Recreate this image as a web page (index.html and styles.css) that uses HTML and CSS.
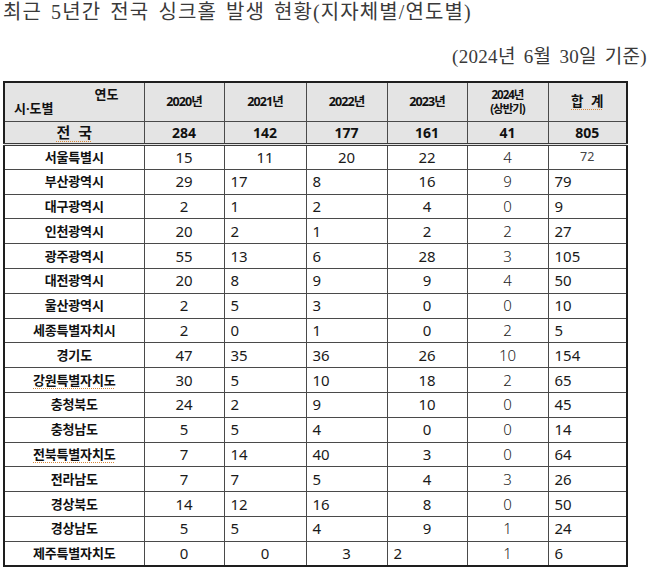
FILE: index.html
```html
<!DOCTYPE html>
<html lang="ko">
<head>
<meta charset="utf-8">
<title>최근 5년간 전국 싱크홀 발생 현황</title>
<link rel="stylesheet" href="styles.css">
</head>
<body>
<h1 class="title">최근 5년간 전국 싱크홀 발생 현황(지자체별/연도별)</h1>
<p class="basis">(2024년 6월 30일 기준)</p>
<table class="stats">
  <colgroup>
    <col class="w-region"><col class="w-a"><col class="w-b"><col class="w-c"><col class="w-d"><col class="w-e"><col class="w-f">
  </colgroup>
  <thead>
    <tr class="head">
      <th class="corner"><span class="corner-year">연도</span><span class="corner-region">시·도별</span></th>
      <th class="year">2020년</th>
      <th class="year">2021년</th>
      <th class="year">2022년</th>
      <th class="year">2023년</th>
      <th class="year half"><span class="half-line">2024년</span><span class="half-line">(상반기)</span></th>
      <th class="sum"><span class="squiggle">합 계</span></th>
    </tr>
    <tr class="total">
      <th class="nation"><span class="squiggle">전 국</span></th>
      <th>284</th><th>142</th><th>177</th><th>161</th><th>41</th><th>805</th>
    </tr>
  </thead>
  <tbody>
    <tr class="first"><th>서울특별시</th><td>15</td><td class="c">11</td><td class="c">20</td><td>22</td><td>4</td><td class="c small">72</td></tr>
    <tr><th>부산광역시</th><td>29</td><td>17</td><td>8</td><td>16</td><td>9</td><td>79</td></tr>
    <tr><th>대구광역시</th><td>2</td><td>1</td><td>2</td><td>4</td><td>0</td><td>9</td></tr>
    <tr><th>인천광역시</th><td>20</td><td>2</td><td>1</td><td>2</td><td>2</td><td>27</td></tr>
    <tr><th>광주광역시</th><td>55</td><td>13</td><td>6</td><td>28</td><td>3</td><td>105</td></tr>
    <tr><th>대전광역시</th><td>20</td><td>8</td><td>9</td><td>9</td><td>4</td><td>50</td></tr>
    <tr><th>울산광역시</th><td>2</td><td>5</td><td>3</td><td>0</td><td>0</td><td>10</td></tr>
    <tr><th>세종특별자치시</th><td>2</td><td>0</td><td>1</td><td>0</td><td>2</td><td>5</td></tr>
    <tr><th>경기도</th><td>47</td><td>35</td><td>36</td><td>26</td><td>10</td><td>154</td></tr>
    <tr><th><span class="squiggle">강원특별자치도</span></th><td>30</td><td>5</td><td>10</td><td>18</td><td>2</td><td>65</td></tr>
    <tr><th>충청북도</th><td>24</td><td>2</td><td>9</td><td>10</td><td>0</td><td>45</td></tr>
    <tr><th>충청남도</th><td>5</td><td>5</td><td>4</td><td>0</td><td>0</td><td>14</td></tr>
    <tr><th><span class="squiggle">전북특별자치도</span></th><td>7</td><td>14</td><td>40</td><td>3</td><td>0</td><td>64</td></tr>
    <tr><th>전라남도</th><td>7</td><td>7</td><td>5</td><td>4</td><td>3</td><td>26</td></tr>
    <tr><th>경상북도</th><td>14</td><td>12</td><td>16</td><td>8</td><td>0</td><td>50</td></tr>
    <tr><th>경상남도</th><td>5</td><td>5</td><td>4</td><td>9</td><td>1</td><td>24</td></tr>
    <tr><th>제주특별자치도</th><td>0</td><td class="c">0</td><td class="c">3</td><td class="l">2</td><td>1</td><td>6</td></tr>
  </tbody>
</table>
</body>
</html>
```

FILE: styles.css
```css
html, body {
  margin: 0;
  padding: 0;
  background: #ffffff;
  color: #111111;
}

.title {
  margin: 0;
  padding-left: 3px;
  font-family: "Liberation Serif", "Noto Sans CJK KR", serif;
  font-weight: 400;
  font-size: 20px;
  line-height: 24px;
  letter-spacing: 1.1px;
  word-spacing: 3px;
  color: #3a3a3a;
}

.basis {
  margin: 21px 0 0;
  padding-right: 3px;
  text-align: right;
  font-family: "Liberation Serif", "Noto Sans CJK KR", serif;
  font-size: 19px;
  line-height: 24px;
  letter-spacing: 0.3px;
  word-spacing: 3px;
  color: #3a3a3a;
}

.stats {
  margin: 12px 0 0 3px;
  width: 623px;
  border-collapse: collapse;
  table-layout: fixed;
  border: 2px solid #1e1e1e;
  font-family: "Noto Sans", "Noto Sans CJK KR", sans-serif;
  color: #111111;
}

.w-region { width: 140px; }
.w-a { width: 80px; }
.w-b { width: 82px; }
.w-c { width: 81px; }
.w-d { width: 80px; }
.w-e { width: 81px; }
.w-f { width: 79px; }

.stats th,
.stats td {
  border: 1px solid #4a4a4a;
  padding: 0;
  line-height: 1;
}

.head th {
  height: 38px;
  background: #e4e4e4;
  font-size: 12.5px;
  font-weight: 700;
  letter-spacing: -0.9px;
  text-align: center;
}

.head .half {
  font-size: 11.5px;
  letter-spacing: -1px;
}

.half-line {
  display: block;
  line-height: 14px;
}

.head .sum {
  font-size: 13.5px;
  letter-spacing: 0;
  word-spacing: 4px;
}

.corner {
  position: relative;
  background: #e4e4e4 linear-gradient(to top right, transparent calc(50% - 0.7px), #3a3a3a 50%, transparent calc(50% + 0.7px));
}

.corner-year {
  position: absolute;
  right: 25px;
  top: 5px;
  font-size: 13px;
  letter-spacing: 0;
}

.corner-region {
  position: absolute;
  left: 9px;
  bottom: 6px;
  font-size: 13px;
  letter-spacing: 0;
}

.total th {
  height: 21px;
  background: #e4e4e4;
  font-size: 14px;
  font-weight: 700;
  text-align: center;
  border-bottom: 3px double #3a3a3a;
}

.total .nation {
  font-size: 15px;
  word-spacing: 4px;
}

.squiggle {
  text-decoration: underline dotted #d8893a;
  text-decoration-thickness: 1px;
  text-underline-offset: 3px;
}

tbody tr {
  height: 24.8px;
}

tbody th {
  font-size: 13px;
  font-weight: 700;
  letter-spacing: -0.2px;
  text-align: center;
}

tbody td {
  font-size: 15px;
  font-weight: 400;
  color: #1a1a1a;
}

tbody td:nth-child(2),
tbody td:nth-child(5),
tbody td:nth-child(6) {
  text-align: center;
}

tbody td:nth-child(3),
tbody td:nth-child(4),
tbody td:nth-child(7) {
  text-align: left;
  padding-left: 6px;
}

tbody td:nth-child(6) {
  font-weight: 300;
  color: #222222;
}

tbody td.c {
  text-align: center;
  padding-left: 0;
}

tbody td.l {
  text-align: left;
  padding-left: 6px;
}

tbody td.small {
  font-size: 12.5px;
  color: #444444;
}
```
